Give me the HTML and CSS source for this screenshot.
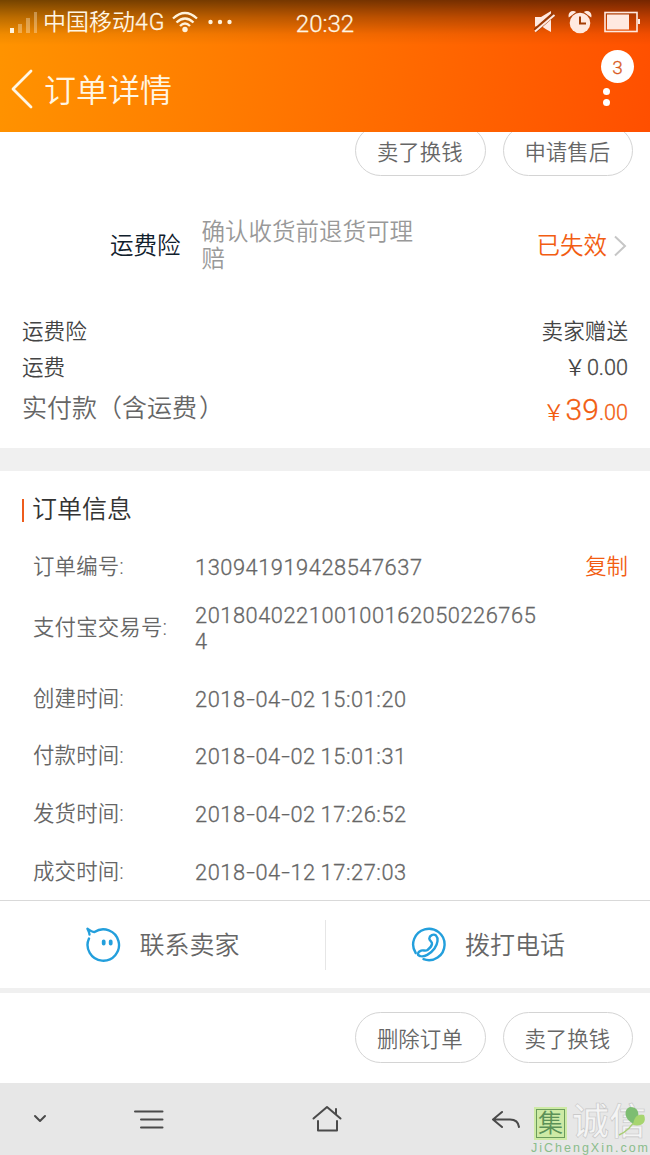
FILE: index.html
```html
<!DOCTYPE html>
<html lang="zh-CN">
<head>
    <meta charset="UTF-8">
    <meta content="width=device-width, initial-scale=1.0" name="viewport">
    <title>订单详情</title>
    <link rel="stylesheet" href="styles.css">
</head>
<body>
<header class="header">
    <div class="status">
        <div class="status-left">
            <svg class="signal" width="28" height="24" viewBox="0 0 28 24" fill="#fff3dc">
                <rect x="0" y="18" width="4" height="5"/>
                <rect x="8" y="14" width="4" height="9" opacity=".35"/>
                <rect x="16" y="8" width="4" height="15" opacity=".35"/>
                <rect x="24" y="2" width="3" height="21" opacity=".35"/>
            </svg>
            <span class="carrier">中国移动<span class="num">4G</span></span>
            <svg class="wifi" width="26" height="22" viewBox="0 0 26 22" fill="none" stroke="#fff3dc" stroke-width="2.3">
                <path d="M1 7.500Q13-3.500 25 7.500"/>
                <path d="M4.500 11.500Q13 3.500 21.500 11.500"/>
                <path d="M8 15Q13 10 18 15"/>
                <circle cx="13" cy="18.500" r="2.700" fill="#fff3dc" stroke="none"/>
            </svg>
            <svg class="dots" width="24" height="6" viewBox="0 0 24 6" fill="#fff3dc">
                <circle cx="2.500" cy="3" r="2.200"/>
                <circle cx="12" cy="3" r="2.200"/>
                <circle cx="21.500" cy="3" r="2.200"/>
            </svg>
        </div>
        <span class="clock num">20:32</span>
        <div class="status-right">
            <svg width="22" height="24" viewBox="0 0 22 24" fill="#ffe9e0">
                <path d="M1 7h6l10-6v21l-5-2.800-4-2.700H1z"/>
                <path d="M1 20.500 20 4" stroke="#9c3a04" stroke-width="4.500"/>
                <path d="M1 21.500 20.500 5" stroke="#ffe9e0" stroke-width="2"/>
            </svg>
            <svg width="24" height="24" viewBox="0 0 24 24" fill="#ffe9e0">
                <circle cx="12" cy="13" r="10.300"/>
                <path d="M.8 7.500C-.8 2 4.500-.8 8.200 2zM23.200 7.500C24.800 2 19.500-.8 15.800 2z"/>
                <path d="M12 6.500v7h6" fill="none" stroke="#a33d05" stroke-width="2"/>
            </svg>
            <svg width="36" height="22" viewBox="0 0 36 22" fill="#ffe9e0">
                <rect x="1" y="1.500" width="32" height="19" fill="none" stroke="#ffe9e0" stroke-width="1.600"/>
                <rect x="3" y="3.500" width="22" height="15"/>
                <rect x="34" y="8" width="2" height="5"/>
            </svg>
        </div>
    </div>
    <div class="titlebar">
        <svg width="24" height="40" viewBox="0 0 24 40" fill="none" stroke="#fff6e4" stroke-width="2.800" stroke-linecap="round" stroke-linejoin="round">
            <path d="M21 2 3 20l18 18"/>
        </svg>
        <h1>订单详情</h1>
        <div class="more">
            <span class="badge num">3</span>
            <i></i><i></i>
        </div>
    </div>
</header>

<main>
    <div class="buttons buttons-top">
        <a class="button">卖了换钱</a>
        <a class="button">申请售后</a>
    </div>

    <section class="insurance">
        <span class="insurance-name">运费险</span>
        <span class="insurance-text">确认收货前退货可理赔</span>
        <span class="insurance-state">已失效</span>
        <svg width="14" height="22" viewBox="0 0 14 22" fill="none" stroke="#c6c6c6" stroke-width="2">
            <path d="m2 1.500 10 9.500L2 20.500"/>
        </svg>
    </section>

    <section class="prices">
        <div class="price"><span>运费险</span><span>卖家赠送</span></div>
        <div class="price"><span>运费</span><span><span class="yen">￥</span><span class="num">0.00</span></span></div>
        <div class="price price-total">
            <span>实付款（含运费<span class="paren-close">）</span></span>
            <span class="total"><span class="yen">￥</span><span class="num"><b>39</b>.00</span></span>
        </div>
    </section>

    <section class="order">
        <h2>订单信息</h2>
        <div class="row"><span class="label">订单编号:</span><span class="value num">130941919428547637</span><a class="copy">复制</a></div>
        <div class="row row-tall"><span class="label">支付宝交易号:</span><span class="value num">2018040221001001620502267654</span></div>
        <div class="row"><span class="label">创建时间:</span><span class="value num">2018<i>-</i>04<i>-</i>02 15:01:20</span></div>
        <div class="row"><span class="label">付款时间:</span><span class="value num">2018<i>-</i>04<i>-</i>02 15:01:31</span></div>
        <div class="row"><span class="label">发货时间:</span><span class="value num">2018<i>-</i>04<i>-</i>02 17:26:52</span></div>
        <div class="row"><span class="label">成交时间:</span><span class="value num">2018<i>-</i>04<i>-</i>12 17:27:03</span></div>
    </section>

    <section class="contact">
        <a>
            <svg width="36" height="36" viewBox="0 0 36 36" fill="none" stroke="#239fdc" stroke-width="2.400" stroke-linecap="round" stroke-linejoin="round">
                <path d="M4 11.500A15.700 15.700 0 1 0 9.500 5C7 5 5 3.500 2.500 1.700 3.500 4 4.500 5.500 4.500 7.500"/>
                <path d="M18.700 14.500v2M25.700 14.500v2" stroke-width="3.800"/>
            </svg>
            <span>联系卖家</span>
        </a>
        <a>
            <svg width="36" height="36" viewBox="0 0 36 36" fill="none" stroke="#239fdc" stroke-width="2.400" stroke-linecap="round" stroke-linejoin="round">
                <path d="M4.700 26A15.700 15.700 0 1 1 12.500 32.200"/>
                <path d="M9 29C13 30.500 19.500 27 23.500 21.500 27 16.500 27.500 11 25 8.500 22.500 6.500 18.500 8.500 18.300 11.500c0 2.700 3.200 2.700 2.700 5.500-.5 3-2.500 4.500-4.500 6-2.500 1.700-4-.5-6.500.7-3.500 1.500-4.300 4.300-1 5.300z"/>
            </svg>
            <span>拨打电话</span>
        </a>
    </section>

    <div class="buttons buttons-bottom">
        <a class="button">删除订单</a>
        <a class="button">卖了换钱</a>
    </div>
</main>

<nav class="navbar">
    <svg class="nav-down" width="14" height="10" viewBox="0 0 14 10"><path d="m2 2 5 5 5-5"/></svg>
    <svg class="nav-menu" width="30" height="20" viewBox="0 0 30 20"><path d="M1 1.500h27.500M7 9.500h21.500M7 17.500h21.500"/></svg>
    <svg class="nav-home" width="30" height="28" viewBox="0 0 30 28"><path d="M1.500 13.500 15 2l13.500 11.500M24 9V4M6 16v9.500h19V16"/></svg>
    <svg class="nav-back" width="30" height="20" viewBox="0 0 30 20"><path d="M11 2 2 9.500l9 7.500M2 9.500h17q8 0 9 7.500"/></svg>
    <div class="watermark">
        <div class="watermark-top">
            <span class="stamp">集</span>
            <span class="hollow">诚信</span>
            <svg class="leaf" width="30" height="32" viewBox="0 0 30 32">
                <path d="M1 29Q12 24 17 14" fill="none" stroke="#a9ce75" stroke-width="1.500"/>
                <path d="M17 18C6 15 5 3 12 1c8 0 9 6 8 10z" fill="#7dbd72"/>
                <path d="M15 19c1-8 4-11 11-10 3 7-2 12-11 10z" fill="#a7d56f"/>
            </svg>
        </div>
        <div class="site">JiChengXin.com</div>
    </div>
</nav>
</body>
</html>
```

FILE: styles.css
```css
* {
    box-sizing: border-box;
}
html, body {
    margin: 0;
    width: 650px;
    height: 1155px;
    overflow: hidden;
}
body {
    display: flex;
    flex-direction: column;
    background: #fff;
    color: #666;
    font-family: Roboto, "Noto Sans CJK SC", sans-serif;
    font-weight: 350;
    font-size: 21.4px;
    line-height: 26px;
}
h1, h2, b {
    margin: 0;
    font-weight: 350;
}
svg {
    display: block;
    flex-shrink: 0;
}
.num {
    -webkit-text-stroke: .3px currentColor;
}

.header {
    position: relative;
    z-index: 1;
    height: 132px;
    flex-shrink: 0;
    color: #fff6e4;
    background:
        linear-gradient(rgba(0, 0, 0, .54), rgba(0, 0, 0, .27) 17px, rgba(0, 0, 0, .06) 34px, transparent 45px),
        linear-gradient(100deg, #ff9400, #ff7200 50%, #ff4f00);
}
.status {
    display: grid;
    grid-template-columns: 1fr auto 1fr;
    height: 46px;
    padding: 0 10px;
}
.status-left, .status-right {
    display: flex;
    align-items: center;
    height: 44px;
}
.status-right {
    justify-content: flex-end;
    gap: 12px;
}
.carrier {
    margin-left: 5px;
    padding-top: 2px;
    font-size: 23px;
    white-space: nowrap;
}
.carrier .num {
    letter-spacing: 1px;
}
.wifi {
    margin-left: 6px;
}
.dots {
    margin-left: 10px;
}
.clock {
    font-size: 24px;
    line-height: 49px;
}
.titlebar {
    display: flex;
    align-items: center;
    height: 86px;
    padding: 0 16px 0 10px;
}
.titlebar h1 {
    margin-left: 10px;
    padding-top: 3px;
    font-size: 32px;
    line-height: 40px;
}
.more {
    display: flex;
    flex-direction: column;
    align-items: flex-start;
    gap: 5px;
    width: 33px;
    height: 78px;
    margin-left: auto;
}
.more i {
    width: 7px;
    height: 7px;
    margin-left: 2px;
    border-radius: 50%;
    background: #fff;
}
.more i:last-child {
    margin-top: -1px;
}
.badge {
    width: 33px;
    height: 33px;
    border-radius: 50%;
    background: #fff;
    color: #d95a22;
    font-size: 19px;
    line-height: 36px;
    text-align: center;
}

main {
    flex: 1;
}
.buttons {
    display: flex;
    justify-content: flex-end;
    gap: 17px;
    padding-right: 17px;
}
.buttons-top {
    margin-top: -7px;
}
.buttons-bottom {
    padding-top: 19px;
}
.button {
    width: 130.5px;
    height: 51px;
    padding-right: 1px;
    border: 1px solid #d4d4d4;
    border-radius: 26px;
    line-height: 53px;
    text-align: center;
}

.insurance {
    display: flex;
    align-items: center;
    height: 56px;
    margin-top: 42px;
    padding: 0 23px 0 110px;
    font-size: 23.5px;
    line-height: 27px;
}
.insurance-name {
    color: #10202c;
}
.insurance-text {
    width: 216px;
    margin-left: 21px;
    color: #999;
}
.insurance-state {
    margin-left: auto;
    margin-right: 6px;
    color: #f25d12;
}

.prices {
    height: 174px;
    padding: 40px 22px 0;
    color: #444;
}
.price {
    display: flex;
    justify-content: space-between;
    height: 36px;
    line-height: 36px;
    font-size: 21.6px;
}
.price-total {
    height: 46px;
    line-height: 46px;
    font-size: 25px;
    color: #666;
}
.paren-close {
    margin-left: 2px;
}
.yen {
    margin-right: 1px;
}
.total {
    padding-top: 1px;
    color: #f25d12;
    font-size: 21.6px;
}
.total b {
    font-size: 30px;
}

.order {
    height: 452px;
    padding: 25px 22px 0;
    border-top: 23px solid #f0f0f0;
}
.order h2 {
    display: flex;
    align-items: center;
    height: 28px;
    color: #333;
    font-size: 25px;
    line-height: 30px;
}
.order h2::before {
    content: "";
    width: 2px;
    height: 23px;
    margin-right: 8px;
    background: #ee5c1c;
}
.row {
    display: flex;
    align-items: center;
    height: 57.8px;
    padding-left: 11px;
}
.row:nth-child(2) {
    margin-top: 14px;
}
.row-tall {
    height: 65px;
    margin-bottom: 9px;
}
.label {
    width: 162px;
    letter-spacing: .2px;
}
.value {
    width: 348px;
    padding-top: 2px;
    font-size: 21.8px;
    letter-spacing: .55px;
    word-spacing: -1px;
    overflow-wrap: break-word;
}
.value i {
    display: inline-block;
    padding: 0 1.5px;
    font-style: normal;
    transform: scaleX(1.4);
}
.copy {
    margin-left: auto;
    color: #f25d12;
}

.contact {
    display: flex;
    align-items: center;
    height: 93px;
    border-top: 1px solid #d9d9d9;
    border-bottom: 5px solid #f0f0f0;
    font-size: 25px;
}
.contact a {
    display: flex;
    align-items: center;
    justify-content: center;
    gap: 18px;
    width: 50%;
    height: 50px;
}
.contact a + a {
    border-left: 1px solid #e6e6e6;
}
.contact span {
    padding-top: 2px;
}

.navbar {
    display: flex;
    position: relative;
    flex-shrink: 0;
    height: 72px;
    background: #e7e7e7;
}
.navbar > svg {
    fill: none;
    stroke: #4a4a4a;
    stroke-width: 2;
    stroke-linecap: round;
    stroke-linejoin: round;
}
.nav-down {
    margin: 31px 0 0 33px;
}
.nav-menu {
    margin: 27px 0 0 87px;
}
.nav-home {
    margin: 22px 0 0 148px;
}
.nav-back {
    margin: 27px 0 0 149px;
}
.watermark {
    position: absolute;
    left: 530px;
    top: 22px;
    width: 120px;
}
.watermark-top {
    display: flex;
    align-items: center;
    height: 36px;
    padding-left: 6px;
}
.stamp {
    width: 29px;
    height: 29px;
    border: 1.5px solid #6b9c5c;
    outline: 2px solid #cdeaa5;
    background: #cdeaa5;
    color: #5b9158;
    font-size: 25px;
    line-height: 27px;
    text-align: center;
}
.hollow {
    margin-left: 7px;
    color: #f4f4f4;
    font-size: 37px;
    font-weight: 500;
    line-height: 36px;
    white-space: nowrap;
    -webkit-text-stroke: .6px #c4c4c4;
}
.leaf {
    position: absolute;
    left: 88px;
    top: 1px;
}
.site {
    padding: 1px 0 0 1px;
    color: #8bbd8c;
    font-family: "Liberation Sans", sans-serif;
    font-size: 12.5px;
    font-weight: 400;
    line-height: 13px;
    letter-spacing: 2px;
    white-space: nowrap;
}
```
